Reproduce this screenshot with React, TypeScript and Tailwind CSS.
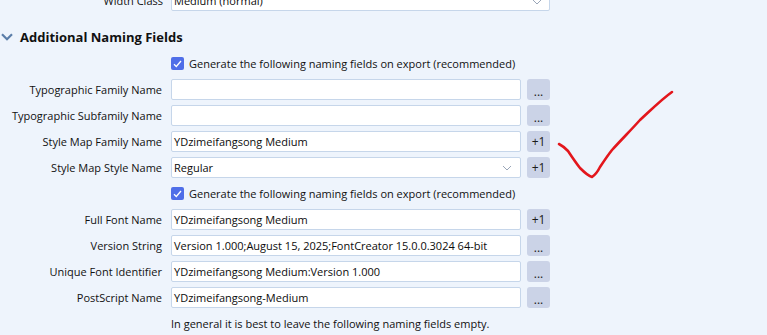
import React from "react";

type Row = {
  label: string;
  value?: string;
  button: "..." | "+1";
  select?: boolean;
};

const firstRows: Row[] = [
  { label: "Typographic Family Name", button: "..." },
  { label: "Typographic Subfamily Name", button: "..." },
  { label: "Style Map Family Name", value: "YDzimeifangsong Medium", button: "+1" },
  { label: "Style Map Style Name", value: "Regular", button: "+1", select: true },
];

const secondRows: Row[] = [
  { label: "Full Font Name", value: "YDzimeifangsong Medium", button: "+1" },
  {
    label: "Version String",
    value: "Version 1.000;August 15, 2025;FontCreator 15.0.0.3024 64-bit",
    button: "...",
  },
  {
    label: "Unique Font Identifier",
    value: "YDzimeifangsong Medium:Version 1.000",
    button: "...",
  },
  { label: "PostScript Name", value: "YDzimeifangsong-Medium", button: "..." },
];

const SmallChevron = ({ className }: { className?: string }) => (
  <svg className={className} width="10" height="6" viewBox="0 0 10 6" fill="none">
    <path d="M1 1l4 4 4-4" stroke="#9aa6b8" strokeWidth="1" />
  </svg>
);

const FieldRow: React.FC<Row> = ({ label, value, button, select }) => (
  <div className="flex h-[21px] items-center">
    <div className="w-[163px] shrink-0 whitespace-nowrap pr-px text-right text-[#111]">{label}</div>
    <div className="relative ml-[8px] flex h-[21px] w-[350px] items-center whitespace-nowrap rounded-[2px] border border-[#c6d6ea] bg-white pl-[2px] text-[#0c0c0c]">
      {value}
      {select && <SmallChevron className="absolute right-[8px] top-[7px]" />}
    </div>
    <div className="ml-[6px] flex h-[21px] w-[23px] items-center justify-center rounded-[3px] bg-[#cbd3e7] text-[12px] text-[#1b1b1b]">
      {button === "..." ? <span className="relative top-[2px]">...</span> : "+1"}
    </div>
  </div>
);

const Check = () => (
  <div className="flex h-[21px] items-center pl-[171px]">
    <div className="flex h-[13px] w-[13px] items-center justify-center rounded-[2px] bg-[#4f6ee8]">
      <svg width="9" height="8" viewBox="0 0 9 8" fill="none">
        <path d="M1 4.2l2.3 2.3L8 1" stroke="white" strokeWidth="1.3" />
      </svg>
    </div>
    <span className="ml-[5px] whitespace-nowrap text-[#111]">
      Generate the following naming fields on export (recommended)
    </span>
  </div>
);

export default function App() {
  return (
    <div
      className="relative h-[335px] w-[767px] overflow-hidden bg-[#eef4fc] text-[11px] leading-none"
      style={{ fontFamily: '"Open Sans", "Noto Sans", sans-serif' }}
    >
      <div className="-mt-[10px] flex h-[21px] items-center">
        <div className="w-[163px] shrink-0 text-right text-[#111]">Width Class</div>
        <div className="relative ml-[8px] flex h-[21px] w-[379px] items-center rounded-[2px] border border-[#c6d6ea] bg-white pl-[2px] text-[#0c0c0c]">
          Medium (normal)
          <SmallChevron className="absolute right-[7px] top-[8px]" />
        </div>
      </div>

      <div className="mt-[16px] flex h-[20px] items-center">
        <svg className="ml-[1px]" width="12" height="8" viewBox="0 0 12 8" fill="none">
          <path d="M1 1.2l5 5 5-5" stroke="#5b7ea9" strokeWidth="2.2" />
        </svg>
        <span className="ml-[7px] text-[13px] font-bold text-[#111]">Additional Naming Fields</span>
      </div>

      <div className="mt-[6px] flex flex-col gap-[5px]">
        <Check />
        {firstRows.map((r) => (
          <FieldRow key={r.label} {...r} />
        ))}
        <Check />
        {secondRows.map((r) => (
          <FieldRow key={r.label} {...r} />
        ))}
        <div className="flex h-[21px] items-center pl-[171px] text-[#111]">
          In general it is best to leave the following naming fields empty.
        </div>
      </div>

      <svg
        className="pointer-events-none absolute left-0 top-0"
        width="767"
        height="335"
        viewBox="0 0 767 335"
        fill="none"
      >
        <path
          d="M559 144 C563 146 566 149 568 151 C572 157 576 163 580 168 C584 172 588 176 592 177 C595 175 598 171 600 167 C604 161 608 155 612 150 C622 139 632 129 640 120 C652 109 662 99 672 92"
          stroke="#e3161c"
          strokeWidth="2.6"
          strokeLinecap="round"
          strokeLinejoin="round"
        />
      </svg>
    </div>
  );
}
